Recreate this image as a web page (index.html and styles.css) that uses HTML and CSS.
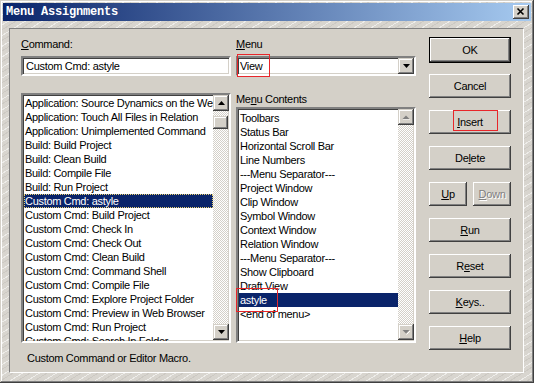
FILE: index.html
```html
<!DOCTYPE html>
<html>
<head>
  <meta charset="utf-8" />
  <title>Menu Assignments</title>
  <link rel="stylesheet" href="styles.css">
</head>
<body>
  <div class="window">
    <div class="titlebar">
      <span class="title">Menu Assignments</span>
      <span class="close-btn">
        <svg viewBox="0 0 16 14" width="16" height="14">
          <path d="M4.5 3.5 L10.5 9.5 M10.5 3.5 L4.5 9.5" stroke="#000" stroke-width="1.6" fill="none"/>
        </svg>
      </span>
    </div>

    <div class="client">
      <div class="main">
        <!-- command column -->
        <div class="col">
          <label class="lbl"><u>C</u>ommand:</label>
          <div class="field sunken">Custom Cmd: astyle</div>
          <div class="listbox sunken cmd-list">
            <ul class="items">
              <li>Application: Source Dynamics on the Web</li>
              <li>Application: Touch All Files in Relation</li>
              <li>Application: Unimplemented Command</li>
              <li>Build: Build Project</li>
              <li>Build: Clean Build</li>
              <li>Build: Compile File</li>
              <li>Build: Run Project</li>
              <li class="sel focus">Custom Cmd: astyle</li>
              <li>Custom Cmd: Build Project</li>
              <li>Custom Cmd: Check In</li>
              <li>Custom Cmd: Check Out</li>
              <li>Custom Cmd: Clean Build</li>
              <li>Custom Cmd: Command Shell</li>
              <li>Custom Cmd: Compile File</li>
              <li>Custom Cmd: Explore Project Folder</li>
              <li>Custom Cmd: Preview in Web Browser</li>
              <li>Custom Cmd: Run Project</li>
              <li>Custom Cmd: Search In Folder</li>
            </ul>
            <div class="vscroll">
              <span class="arrow raised">
                <svg viewBox="0 0 7 4" width="7" height="4"><path d="M3.5 0 L7 4 L0 4 Z" fill="#000"/></svg>
              </span>
              <div class="track"><div class="thumb raised"></div></div>
              <span class="arrow raised">
                <svg viewBox="0 0 7 4" width="7" height="4"><path d="M0 0 L7 0 L3.5 4 Z" fill="#000"/></svg>
              </span>
            </div>
          </div>
        </div>

        <!-- menu column -->
        <div class="col">
          <label class="lbl"><u>M</u>enu</label>
          <div class="combo sunken">
            <span class="combo-text">View</span>
            <span class="arrow raised">
              <svg viewBox="0 0 7 4" width="7" height="4"><path d="M0 0 L7 0 L3.5 4 Z" fill="#000"/></svg>
            </span>
            <span class="mark mark-view"></span>
          </div>
          <label class="lbl lbl-contents">Me<u>n</u>u Contents</label>
          <div class="listbox sunken menu-list">
            <ul class="items">
              <li>Toolbars</li>
              <li>Status Bar</li>
              <li>Horizontal Scroll Bar</li>
              <li>Line Numbers</li>
              <li>---Menu Separator---</li>
              <li>Project Window</li>
              <li>Clip Window</li>
              <li>Symbol Window</li>
              <li>Context Window</li>
              <li>Relation Window</li>
              <li>---Menu Separator---</li>
              <li>Show Clipboard</li>
              <li>Draft View</li>
              <li class="sel">astyle</li>
              <li>&lt;end of menu&gt;</li>
            </ul>
            <div class="vscroll">
              <span class="arrow raised">
                <svg viewBox="0 0 8 5" width="8" height="5"><path d="M4 0.5 L7.5 4 L0.5 4 Z" fill="#808080"/><path d="M1 5 L8 5" stroke="#fff" stroke-width="1"/></svg>
              </span>
              <div class="track"></div>
              <span class="arrow raised">
                <svg viewBox="0 0 8 5" width="8" height="5"><path d="M0.5 0 L7.5 0 L4 3.5 Z" fill="#808080"/><path d="M4.5 4.5 L8 1" stroke="#fff" stroke-width="1"/></svg>
              </span>
            </div>
            <span class="mark mark-astyle"></span>
          </div>
        </div>

        <!-- buttons -->
        <div class="buttons">
          <button class="btn btn-default">OK</button>
          <button class="btn">Cancel</button>
          <button class="btn"><u>I</u>nsert<span class="mark mark-insert"></span></button>
          <button class="btn">De<u>l</u>ete</button>
          <div class="btn-pair">
            <button class="btn"><u>U</u>p</button>
            <button class="btn disabled"><u>D</u>own</button>
          </div>
          <button class="btn"><u>R</u>un</button>
          <button class="btn">R<u>e</u>set</button>
          <button class="btn"><u>K</u>eys..</button>
          <button class="btn"><u>H</u>elp</button>
        </div>
      </div>

      <div class="status">Custom Command or Editor Macro.</div>
    </div>
  </div>
</body>
</html>
```

FILE: styles.css
```css
:root {
  --face: #d4d0c8;
  --shadow: #808080;
  --dark: #404040;
  --hilite: #ffffff;
  --select: #0a246a;
  --annot: #e8262a;
}

* {
  margin: 0;
  padding: 0;
  box-sizing: border-box;
}

body {
  width: 534px;
  height: 383px;
  overflow: hidden;
  font-family: "Liberation Sans", Arial, sans-serif;
  font-size: 11px;
  letter-spacing: -0.3px;
  color: #000;
  background: var(--face);
}

u {
  text-decoration: underline;
  text-underline-offset: 1px;
}

/* frame */
.window {
  width: 534px;
  height: 383px;
  padding: 3px;
  display: flex;
  flex-direction: column;
  background:
    repeating-linear-gradient(-32deg, rgba(255,255,255,0.55) 0 1px, transparent 1px 5px, rgba(150,146,140,0.18) 5px 6px, transparent 6px 9px),
    #d8d5cf;
  box-shadow: inset -1px -1px var(--dark), inset 1px 1px var(--face), inset -2px -2px var(--shadow), inset 2px 2px #fff;
}

.titlebar {
  height: 18px;
  flex-shrink: 0;
  display: flex;
  align-items: center;
  justify-content: space-between;
  padding: 0 2px 0 3px;
  background: linear-gradient(to right, #0a246a, #a6caf0);
}

.title {
  font-family: "Liberation Mono", "DejaVu Sans Mono", monospace;
  font-weight: bold;
  font-size: 12px;
  color: #fff;
  letter-spacing: -0.2px;
}

.close-btn {
  width: 16px;
  height: 14px;
  display: flex;
  background: var(--face);
  box-shadow: inset -1px -1px var(--dark), inset 1px 1px #fff, inset -2px -2px var(--shadow);
}

.client {
  flex: 1;
  margin: 7px 7px 7px 6px;
  background: var(--face);
  border: 1px solid;
  border-color: var(--shadow) #fff #fff var(--shadow);
}

.main {
  display: grid;
  grid-template-columns: 210px 180px 90px;
  column-gap: 5px;
  align-items: start;
  padding: 8px 0 0 11px;
}

.col {
  display: flex;
  flex-direction: column;
}

.lbl {
  display: block;
  height: 14px;
  line-height: 14px;
}

/* sunken fields */
.sunken {
  border: 2px solid;
  border-color: var(--shadow) #fff #fff var(--shadow);
  box-shadow: inset 1px 1px var(--dark), inset -1px -1px var(--face);
  background: #fff;
}

.raised {
  background: var(--face);
  box-shadow: inset -1px -1px var(--dark), inset 1px 1px var(--face), inset -2px -2px var(--shadow), inset 2px 2px #fff;
}

.field {
  margin-top: 5px;
  height: 20px;
  line-height: 16px;
  padding: 0 3px;
}

.combo {
  position: relative;
  margin-top: 5px;
  height: 20px;
  display: flex;
  align-items: center;
  justify-content: space-between;
}

.combo-text {
  padding-left: 2px;
  line-height: 16px;
}

.lbl-contents {
  margin-top: 16px;
}

.listbox {
  position: relative;
  display: flex;
}

.cmd-list {
  margin-top: 17px;
  height: 250px;
}

.menu-list {
  margin-top: 1px;
  height: 236px;
}

.items {
  list-style: none;
  flex: 1;
  min-width: 0;
  overflow: hidden;
  padding: 1px 0 0 1px;
}

.menu-list .items {
  padding-top: 2px;
}

.items li {
  height: 14px;
  line-height: 14px;
  padding-left: 1px;
  white-space: nowrap;
  overflow: hidden;
}

.items .sel {
  background: var(--select);
  color: #fff;
}

.items .focus {
  outline: 1px dotted #e8d070;
  outline-offset: -1px;
}

/* scrollbars */
.vscroll {
  width: 16px;
  flex-shrink: 0;
  display: flex;
  flex-direction: column;
  padding: 0 1px 1px 0;
}

.arrow {
  width: 16px;
  height: 16px;
  flex-shrink: 0;
  display: flex;
  align-items: center;
  justify-content: center;
}

.track {
  flex: 1;
  background: repeating-conic-gradient(#fff 0 25%, var(--face) 0 50%) 0 0 / 2px 2px;
}

.thumb {
  height: 13px;
  margin-top: 5px;
}

/* buttons */
.buttons {
  display: flex;
  flex-direction: column;
  gap: 12px;
  margin-left: 8px;
}

.btn {
  position: relative;
  height: 24px;
  width: 100%;
  border: none;
  font: inherit;
  letter-spacing: inherit;
  color: #000;
  background: var(--face);
  box-shadow: inset -1px -1px var(--dark), inset 1px 1px #fff, inset -2px -2px var(--shadow), inset 2px 2px var(--face);
  display: flex;
  align-items: center;
  justify-content: center;
}

.btn-default {
  height: 26px;
  margin-bottom: -1px;
  border: 1px solid #000;
}

.btn-pair {
  display: grid;
  grid-template-columns: 1fr 1fr;
  gap: 6px;
}

.btn.disabled {
  color: var(--shadow);
  text-shadow: 1px 1px #fff;
}

.status {
  margin-top: 1px;
  padding-left: 17px;
  height: 14px;
  line-height: 14px;
}

/* red annotation boxes */
.mark {
  position: absolute;
  border: 1px solid var(--annot);
  pointer-events: none;
}

.mark-view {
  left: -1px;
  top: -4px;
  width: 33px;
  height: 23px;
}

.mark-insert {
  left: 24px;
  top: 0;
  width: 45px;
  height: 21px;
}

.mark-astyle {
  left: -2px;
  top: 179px;
  width: 42px;
  height: 24px;
}
```
